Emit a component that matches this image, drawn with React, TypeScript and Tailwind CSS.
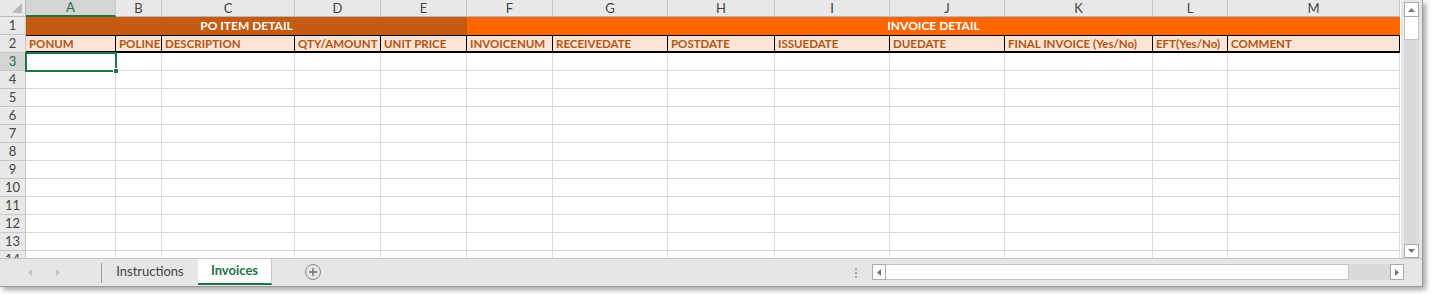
import React from 'react';

type Col = { letter: string; title: string };

const cols: Col[] = [
  { letter: 'A', title: 'PONUM' },
  { letter: 'B', title: 'POLINE' },
  { letter: 'C', title: 'DESCRIPTION' },
  { letter: 'D', title: 'QTY/AMOUNT' },
  { letter: 'E', title: 'UNIT PRICE' },
  { letter: 'F', title: 'INVOICENUM' },
  { letter: 'G', title: 'RECEIVEDATE' },
  { letter: 'H', title: 'POSTDATE' },
  { letter: 'I', title: 'ISSUEDATE' },
  { letter: 'J', title: 'DUEDATE' },
  { letter: 'K', title: 'FINAL INVOICE (Yes/No)' },
  { letter: 'L', title: 'EFT(Yes/No)' },
  { letter: 'M', title: 'COMMENT' },
];

const rows = [3, 4, 5, 6, 7, 8, 9, 10, 11, 12, 13, 14];

function Tri({ dir, className }: { dir: 'up' | 'down' | 'left' | 'right'; className?: string }) {
  const pts = {
    up: '0,4 7,4 3.5,0',
    down: '0,0 7,0 3.5,4',
    left: '4,0 4,7 0,3.5',
    right: '0,0 0,7 4,3.5',
  }[dir];
  const vb = dir === 'up' || dir === 'down' ? '0 0 7 4' : '0 0 4 7';
  const size = dir === 'up' || dir === 'down' ? 'w-[7px] h-[4px]' : 'w-[4px] h-[7px]';
  return (
    <svg viewBox={vb} className={`${size} ${className ?? ''}`}>
      <polygon points={pts} fill="currentColor" />
    </svg>
  );
}

function RowHead({ n, active }: { n: number; active?: boolean }) {
  return (
    <div
      className={`h-[18px] flex items-center justify-center border-r border-b border-[#c8c8c8] text-[13px] leading-none ${
        active ? 'bg-[#d4d4d4] text-[#217346]' : 'bg-[#e9e9e9] text-[#444]'
      }`}
    >
      {n}
    </div>
  );
}

export default function App() {
  return (
    <div className="w-[1431px] h-[294px] bg-white overflow-hidden" style={{ fontFamily: 'Lato, "Open Sans", sans-serif' }}>
      <div className="w-[1423px] h-[287px] flex flex-col bg-[#e6e6e6] border-r border-b border-[#9c9c9c] shadow-[3px_3px_5px_rgba(0,0,0,0.35)]">
        <div className="flex h-[258px]">
          {/* sheet grid */}
          <div className="relative w-[1401px] h-[258px] overflow-hidden bg-white">
            <div className="grid grid-cols-[26px_90px_46px_133px_86px_86px_86px_115px_107px_115px_115px_148px_75px_172px]">
              {/* column headers */}
              <div className="h-[17px] bg-[#e9e9e9] border-r border-b border-[#b8b8b8] relative">
                <svg viewBox="0 0 10 10" className="absolute right-[3px] bottom-[3px] w-[10px] h-[10px]">
                  <polygon points="10,0 10,10 0,10" fill="#b9b9b9" />
                </svg>
              </div>
              {cols.map((c, i) => (
                <div
                  key={c.letter}
                  className={`h-[17px] flex items-center justify-center border-r text-[13px] leading-none ${
                    i === 0
                      ? 'bg-[#d4d4d4] text-[#217346] border-b-2 border-b-[#217346] border-r-[#c8c8c8]'
                      : 'bg-[#e9e9e9] text-[#444] border-b border-[#c8c8c8] border-b-[#b8b8b8]'
                  }`}
                >
                  {c.letter}
                </div>
              ))}

              {/* row 1 */}
              <RowHead n={1} />
              <div className="col-span-5 h-[18px] bg-[#c55a11] flex items-center justify-center text-white font-bold text-[12px]">
                PO ITEM DETAIL
              </div>
              <div className="col-span-8 h-[18px] bg-[#ff6600] flex items-center justify-center text-white font-bold text-[12px]">
                INVOICE DETAIL
              </div>

              {/* row 2 */}
              <RowHead n={2} />
              {cols.map((c) => (
                <div
                  key={c.title}
                  className="h-[18px] bg-[#fce4d6] border-t border-r border-b-2 border-black flex items-center pl-[3px] pt-[1px] text-[11.5px] font-bold text-[#b5540f] whitespace-nowrap overflow-hidden leading-none"
                >
                  {c.title}
                </div>
              ))}

              {/* data rows */}
              {rows.map((r) => (
                <React.Fragment key={r}>
                  <RowHead n={r} active={r === 3} />
                  {cols.map((c) => (
                    <div key={c.letter + r} className="h-[18px] border-r border-b border-[#d9d9d9]" />
                  ))}
                </React.Fragment>
              ))}
            </div>

            {/* active cell A3 */}
            <div className="absolute left-[25px] top-[52px] w-[92px] h-[20px] border-2 border-[#217346]">
              <div className="absolute -right-[4px] -bottom-[4px] w-[6px] h-[6px] bg-[#217346] border border-white" />
            </div>
          </div>

          {/* vertical scrollbar */}
          <div className="w-[21px] h-[258px] flex flex-col items-center pt-[2px] bg-[#e6e6e6]">
            <div className="w-[15px] flex-1 bg-[#dadada] flex flex-col">
              <div className="h-[15px] bg-white border border-[#ababab] flex items-center justify-center text-[#777]">
                <Tri dir="up" />
              </div>
              <div className="h-[23px] bg-white border border-t-0 border-[#c4c4c4]" />
              <div className="flex-1" />
              <div className="h-[14px] bg-white border border-[#ababab] flex items-center justify-center text-[#777]">
                <Tri dir="down" />
              </div>
            </div>
          </div>
        </div>

        {/* sheet tabs */}
        <div className="h-[28px] flex items-start border-t border-[#c6c6c6] bg-[#e6e6e6]">
          <div className="w-[101px] h-[27px] flex items-center text-[#c2c2c2]">
            <Tri dir="left" className="ml-[28px]" />
            <Tri dir="right" className="ml-[24px]" />
          </div>
          <div className="w-px h-[20px] mt-[4px] bg-[#9e9e9e]" />
          <div className="w-[96px] h-[26px] flex items-center justify-center text-[13px] text-[#444]">Instructions</div>
          <div className="w-[74px] h-[26px] bg-white border-b-2 border-[#217346] border-r border-r-[#c6c6c6] flex items-center justify-center text-[13px] font-bold text-[#217346]">
            Invoices
          </div>
          <div className="ml-[33px] mt-[5px] w-[16px] h-[16px] rounded-full border border-[#8a8a8a] flex items-center justify-center text-[#6a6a6a]">
            <svg viewBox="0 0 8 8" className="w-[8px] h-[8px]">
              <path d="M4 0v8M0 4h8" stroke="currentColor" strokeWidth="1.3" />
            </svg>
          </div>
          <div className="flex-1" />
          <div className="mt-[9px] mr-[15px] flex flex-col gap-[2px]">
            <div className="w-[2px] h-[2px] bg-[#a8a8a8]" />
            <div className="w-[2px] h-[2px] bg-[#a8a8a8]" />
            <div className="w-[2px] h-[2px] bg-[#a8a8a8]" />
          </div>
          {/* horizontal scrollbar */}
          <div className="mt-[5px] w-[532px] h-[16px] flex bg-[#dadada]">
            <div className="w-[14px] h-[16px] bg-white border border-[#ababab] flex items-center justify-center text-[#777]">
              <Tri dir="left" />
            </div>
            <div className="w-[463px] h-[16px] bg-white border border-l-0 border-[#c4c4c4]" />
            <div className="flex-1" />
            <div className="w-[14px] h-[16px] bg-white border border-[#ababab] flex items-center justify-center text-[#777]">
              <Tri dir="right" />
            </div>
          </div>
          <div className="w-[18px]" />
        </div>
      </div>
    </div>
  );
}
